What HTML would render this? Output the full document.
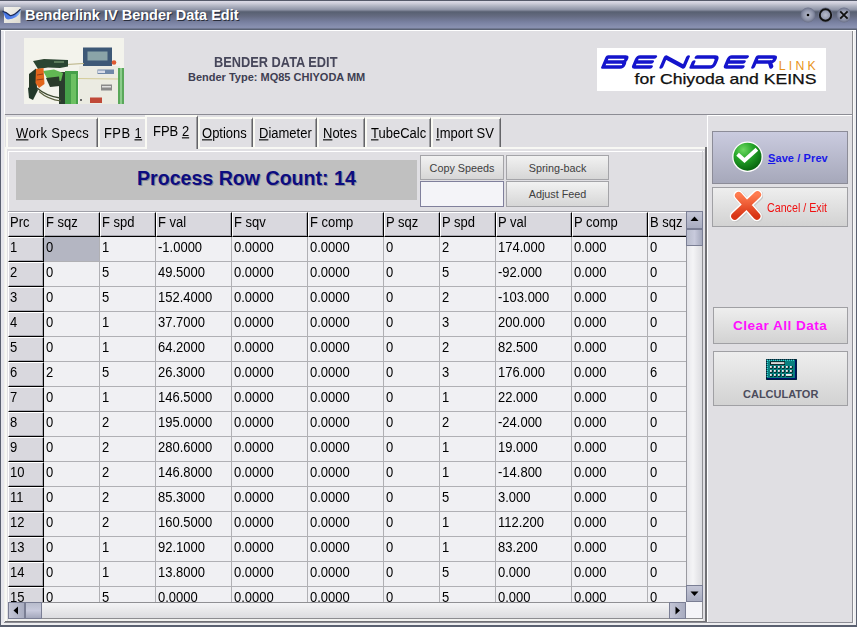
<!DOCTYPE html>
<html><head><meta charset="utf-8">
<style>
*{margin:0;padding:0;box-sizing:border-box}
html,body{width:857px;height:627px;overflow:hidden;background:#E0DFE3;font-family:"Liberation Sans",sans-serif;color:#000}
.a{position:absolute}
#title{left:0;top:0;width:857px;height:30px;background:linear-gradient(to bottom,#555a6a 0px,#555a6a 1px,#dadae6 1px,#d0d0dc 3px,#b0b4c2 6px,#8c92a4 10px,#6a7082 11px,#586072 12px,#646a80 16px,#7880a0 22px,#8890b0 27px,#8890b0 28px,#5a6274 29px,#5a6274 30px)}
#ttext{left:25px;top:7px;font-size:14.5px;font-weight:bold;color:#fff;text-shadow:1px 1px 0 #2a2e3c;white-space:nowrap;letter-spacing:0}
.frameL{left:0;top:30px;width:1px;height:597px;background:#5a6070}
.frameR{left:856px;top:30px;width:1px;height:597px;background:#5a6070}
.frameB{left:0;top:625px;width:857px;height:2px;background:#5a6070}
.hl{background:#fff}
.gl{background:#8c8c94}
/* tabs */
.tab{height:30px;top:117px;background:#E0DFE3;border-top:2px solid #fafaf4;border-left:2px solid #fafaf4;border-right:1px solid #646468;box-shadow:inset -1px 0 0 #9c9ca0}
.tt{font-size:13px;line-height:15px;white-space:nowrap;transform:scaleY(1.1);transform-origin:0 0;letter-spacing:0}
.tt u{text-decoration:underline;text-underline-offset:1px;text-decoration-thickness:1px}
.tsel{top:115px;height:34px;border-left:2px solid #fafaf4;border-top:2px solid #fafaf4;border-right:1px solid #646468;z-index:3}
/* grid */
#grid{left:8px;top:211px;width:695px;height:408px;overflow:hidden;background:#f0f0f4}
#grid:before{content:"";position:absolute;left:0;top:0;width:100%;height:1px;background:#a0a0a8}
.hc,.rh,.c,.cs{position:absolute;height:25px;font-size:13px;line-height:15px;white-space:nowrap;overflow:hidden}
.hc span,.rh span,.c span,.cs span{display:inline-block;transform:scaleY(1.1);transform-origin:0 0}
.hc,.rh{background:#d9d8de;border-top:1px solid #fff;border-left:1px solid #fff;border-right:1px solid #000;border-bottom:1px solid #000;box-shadow:inset -1px -1px 0 #a8a8b0;padding:1px 0 0 1px}
.c,.cs{background:#f0f0f3;border-right:1px solid #b0b0b4;border-bottom:1px solid #b0b0b4;padding:2px 0 0 2px}
.cs{background:#b4b6c2}
.btn{background:linear-gradient(to bottom,#f2f2f2,#d6d6d6);border:1px solid #a4a4a8;text-align:center;color:#404040;white-space:nowrap}
</style></head><body>
<!-- title bar -->
<div id="title" class="a"></div>
<svg class="a" style="left:1px;top:7px" width="21" height="17" viewBox="0 0 21 17">
 <defs><linearGradient id="ib" x1="0" y1="0" x2="1" y2="1"><stop offset="0" stop-color="#f4f4f0"/><stop offset="1" stop-color="#dcdad0"/></linearGradient>
 <linearGradient id="bb" x1="0" y1="0" x2="1" y2="0"><stop offset="0" stop-color="#3f6fe0"/><stop offset="0.7" stop-color="#5a88f0"/><stop offset="1" stop-color="#90c0f0"/></linearGradient></defs>
 <rect x="3" y="0" width="16.5" height="16" fill="url(#ib)"/>
 <path d="M1.5 4.5 Q5 5 9 8.5 Q12 9.5 19.5 2.5 L19.5 5 Q16 12 7 12.5 Q4 12 3 7 Z" fill="url(#bb)"/>
 <path d="M1.5 4.3 Q5 4.8 9 8.5 Q12 9.6 19.5 2.3" stroke="#1c2c5c" stroke-width="1.3" fill="none"/>
</svg>
<div id="ttext" class="a">Benderlink IV Bender Data Edit</div>
<!-- window buttons -->
<svg class="a" style="left:800px;top:5px" width="50" height="20" viewBox="0 0 50 20">
 <defs><radialGradient id="wb" cx="50%" cy="50%" r="50%"><stop offset="0" stop-color="#b8bccc"/><stop offset="0.7" stop-color="#8a90a6"/><stop offset="1" stop-color="#6a7088"/></radialGradient></defs>
 <circle cx="8" cy="10" r="7.5" fill="url(#wb)"/>
 <circle cx="8" cy="10" r="1.3" fill="#000"/>
 <circle cx="25.5" cy="10" r="7.5" fill="url(#wb)"/>
 <circle cx="25.5" cy="10" r="5.7" fill="none" stroke="#111" stroke-width="1.9"/>
 <circle cx="44" cy="10" r="7.5" fill="url(#wb)"/>
 <path d="M40.2 6.4 L47.6 13.6 M47.6 6.4 L40.2 13.6" stroke="#111" stroke-width="1.9"/>
</svg>
<div class="a hl" style="left:1px;top:30px;width:855px;height:1px"></div>
<div class="a frameL"></div><div class="a frameR"></div><div class="a frameB"></div>
<div class="a" style="left:1px;top:31px;width:3px;height:594px;background:#e6e6ec"></div>
<div class="a" style="left:4px;top:31px;width:1px;height:591px;background:#fff"></div>
<div class="a" style="left:853px;top:31px;width:3px;height:594px;background:#eeeef0"></div>
<div class="a" style="left:853px;top:31px;width:1px;height:594px;background:#fafafa"></div>
<div class="a" style="left:852px;top:31px;width:1px;height:592px;background:#8c8c90"></div>
<div class="a" style="left:1px;top:623px;width:855px;height:2px;background:#eeeef0"></div>

<!-- header area -->
<svg class="a" style="left:24px;top:38px" width="100" height="66" viewBox="0 0 100 66">
 <defs><filter id="bl" x="-5%" y="-5%" width="110%" height="110%"><feGaussianBlur stdDeviation="0.75"/></filter></defs>
 <rect width="100" height="66" fill="#f3f3ec"/>
 <g filter="url(#bl)">
 <rect x="55" y="28" width="41" height="38" fill="#ebebe2"/>
 <path d="M52 40.5 L95 41" stroke="#d4cc98" stroke-width="1"/>
 <rect x="59" y="9.5" width="29" height="18.5" fill="#3e5876"/>
 <rect x="63.5" y="13.5" width="20" height="9" fill="#8aa4a8"/>
 <circle cx="90" cy="24.5" r="2.3" fill="#e05a30"/>
 <rect x="73.5" y="31.5" width="16.5" height="4.5" fill="#7088a8"/>
 <rect x="74" y="32.5" width="7" height="2.5" fill="#d8dce8"/>
 <rect x="77" y="46.5" width="11" height="6" fill="#8a8a8a"/>
 <rect x="78" y="48" width="9" height="1.5" fill="#e0e0e0"/>
 <rect x="66" y="59.5" width="12" height="5.5" fill="#c04838"/>
 <rect x="94" y="30" width="6" height="36" fill="#5aa85a"/>
 <rect x="96" y="30" width="2" height="36" fill="#8ccc8c"/>
 <path d="M42 26.5 L60 25.5" stroke="#b8b080" stroke-width="1"/>
 <rect x="35" y="34" width="7" height="32" fill="#2c3e2e"/>
 <rect x="41" y="33" width="13" height="33" fill="#44a048"/>
 <rect x="47" y="36" width="5" height="30" fill="#6cc062"/>
 <path d="M9 23 L20 21 L44 22 L44 28.5 L36 30 L24 29.5 L14 31 Z" fill="#2c4430"/>
 <rect x="30" y="23" width="10" height="2" fill="#5a7a5a"/>
 <path d="M19 33 L30 31.5 L39 35 L37 43 L24 42 Z" fill="#62b852"/>
 <path d="M22 40 L35 38.5 L36 48 L26 49 Z" fill="#2a3a2a"/>
 <path d="M5 36 L12 30.5 L13 50 L9 55 L5 50 Z" fill="#283828"/>
 <path d="M12 31 L19.5 30 L20.5 46 L15 50 L11.5 45 Z" fill="#e2661f"/>
 <path d="M13 37 L19 36 M12.5 42 L19.5 41" stroke="#8a3a10" stroke-width="0.9"/>
 <path d="M4 50 L11 46 L14 52 L9 62 L5 60 Z" fill="#24382a"/>
 <path d="M13 50 Q22 58 36 60" stroke="#3c4830" stroke-width="1.3" fill="none"/>
 <path d="M15 53.5 Q24 61.5 37 63" stroke="#5a6040" stroke-width="1.1" fill="none"/>
 <circle cx="57" cy="62" r="1" fill="#404040"/>
 </g>
</svg>
<div class="a" style="left:214px;top:54px;font-size:12.8px;font-weight:bold;color:#46465a;white-space:nowrap;transform:scaleY(1.1);transform-origin:0 0">BENDER DATA EDIT</div>
<div class="a" style="left:188px;top:71px;font-size:11px;font-weight:bold;color:#3e3e52;white-space:nowrap">Bender Type: MQ85 CHIYODA MM</div>

<!-- logo -->
<div class="a" style="left:597px;top:48px;width:229px;height:43px;background:#fff"></div>
<svg class="a" style="left:597px;top:48px" width="229" height="43" viewBox="0 0 229 43">
 <g transform="translate(0 7.25) skewX(-23.3)"><path d="M11.100000000000001 11.7 L11.100000000000001 1.8 L28.700000000000003 1.8 Q30.900000000000002 1.8 30.900000000000002 4.0 Q30.900000000000002 6.75 28.200000000000003 6.75 L11.100000000000001 6.75 M28.200000000000003 6.75 Q30.900000000000002 6.75 30.900000000000002 9.15 Q30.900000000000002 11.7 28.700000000000003 11.7 L11.100000000000001 11.7 M58.900000000000006 1.8 L43.099999999999994 1.8 Q41.39999999999999 1.8 41.39999999999999 3.8 L41.39999999999999 9.7 Q41.39999999999999 11.7 43.099999999999994 11.7 L58.900000000000006 11.7 M41.39999999999999 6.75 L57.900000000000006 6.75 M69.39999999999999 11.7 L69.39999999999999 1.8 L91.7 11.7 L91.7 1.8 M100.39999999999999 1.8 L118.2 1.8 Q121.4 1.8 121.4 5.3 L121.4 8.2 Q121.4 11.7 118.2 11.7 L99.39999999999999 11.7 L99.39999999999999 6.75 M150.7 1.8 L134.9 1.8 Q133.20000000000002 1.8 133.20000000000002 3.8 L133.20000000000002 9.7 Q133.20000000000002 11.7 134.9 11.7 L150.7 11.7 M133.20000000000002 6.75 L149.7 6.75 M161.20000000000002 11.7 L161.20000000000002 1.8 L177.2 1.8 Q179.39999999999998 1.8 179.39999999999998 4.0 Q179.39999999999998 6.75 176.7 6.75 L161.20000000000002 6.75 M175.7 6.75 L179.39999999999998 11.7" fill="none" stroke="#1414cc" stroke-width="3.6" stroke-linecap="round" stroke-linejoin="round"/></g>
 <text x="181.7" y="21.6" font-family="Liberation Sans" font-size="12.3" fill="#e89418" textLength="37" lengthAdjust="spacing">LINK</text>
 <text x="37.5" y="35.7" font-family="Liberation Sans" font-size="14.8" fill="#101010" stroke="#101010" stroke-width="0.25" textLength="182" lengthAdjust="spacingAndGlyphs">for Chiyoda and KEINS</text>
</svg>

<!-- separators -->
<div class="a gl" style="left:4px;top:114px;width:849px;height:1px"></div>
<div class="a hl" style="left:707px;top:115px;width:145px;height:1px"></div>
<div class="a hl" style="left:707px;top:115px;width:1px;height:507px"></div>
<div class="a gl" style="left:852px;top:114px;width:1px;height:509px"></div>
<div class="a gl" style="left:4px;top:622px;width:849px;height:1px"></div>
<div class="a" style="left:4px;top:114px;width:1px;height:508px;background:#f0f0ec"></div>

<!-- tab page frame -->
<div class="a" style="left:5px;top:147px;width:701px;height:2px;background:#f8f8f4"></div>
<div class="a" style="left:5px;top:147px;width:2px;height:475px;background:#f8f8f4"></div>
<div class="a" style="left:705px;top:147px;width:2px;height:475px;background:#707074"></div>
<div class="a" style="left:5px;top:621px;width:702px;height:1px;background:#707074"></div>
<div class="a" style="left:8px;top:619px;width:695px;height:2px;background:#f2f2f0"></div>
<div class="a" style="left:8px;top:151px;width:696px;height:1px;background:#fff"></div>
<div class="a" style="left:8px;top:151px;width:1px;height:468px;background:#fff"></div>
<div class="a" style="left:702px;top:151px;width:1px;height:468px;background:#d0d0d4"></div>

<!-- tabs -->
<div class="a tab" style="left:6px;width:92px"></div>
<div class="a tab" style="left:98px;width:47px;border-right:none;box-shadow:none"></div>
<div class="a tab" style="left:198px;width:55px"></div>
<div class="a tab" style="left:253px;width:64px"></div>
<div class="a tab" style="left:317px;width:48px"></div>
<div class="a tab" style="left:365px;width:66px"></div>
<div class="a tab" style="left:431px;width:70px"></div>
<div class="a tab tsel" style="left:145px;width:53px"></div>
<div class="a tt" style="left:16px;top:125px;letter-spacing:0.33px"><u>W</u>ork Specs</div>
<div class="a tt" style="left:104px;top:125px;letter-spacing:0.4px">FPB <u>1</u></div>
<div class="a tt" style="left:153px;top:123px;z-index:4">FPB <u>2</u></div>
<div class="a tt" style="left:202px;top:125px"><u>O</u>ptions</div>
<div class="a tt" style="left:259px;top:125px"><u>D</u>iameter</div>
<div class="a tt" style="left:323px;top:125px"><u>N</u>otes</div>
<div class="a tt" style="left:371px;top:125px"><u>T</u>ubeCalc</div>
<div class="a tt" style="left:436px;top:125px"><u>I</u>mport SV</div>
<!-- banner -->
<div class="a" style="left:16px;top:160px;width:401px;height:40px;background:#c0c0c0"></div>
<div class="a" style="left:137px;top:167px;font-size:19.6px;font-weight:bold;color:#0c0c80;text-shadow:1px 1px 0 #8a8a96;white-space:nowrap">Process Row Count: 14</div>

<div class="a btn" style="left:420px;top:155px;width:84px;height:25px;font-size:10.8px;line-height:24px">Copy Speeds</div>
<div class="a" style="left:420px;top:181px;width:84px;height:26px;background:#f4f4f8;border:1px solid #80809c"></div>
<div class="a btn" style="left:506px;top:155px;width:103px;height:25px;font-size:10.8px;line-height:24px">Spring-back</div>
<div class="a btn" style="left:506px;top:181px;width:103px;height:26px;font-size:10.8px;line-height:24px">Adjust Feed</div>

<!-- grid -->
<div id="grid" class="a">
<div class="hc" style="left:0px;top:1px;width:36px"><span>Prc</span></div>
<div class="hc" style="left:36px;top:1px;width:56px"><span>F sqz</span></div>
<div class="hc" style="left:92px;top:1px;width:56px"><span>F spd</span></div>
<div class="hc" style="left:148px;top:1px;width:76px"><span>F val</span></div>
<div class="hc" style="left:224px;top:1px;width:76px"><span>F sqv</span></div>
<div class="hc" style="left:300px;top:1px;width:76px"><span>F comp</span></div>
<div class="hc" style="left:376px;top:1px;width:56px"><span>P sqz</span></div>
<div class="hc" style="left:432px;top:1px;width:56px"><span>P spd</span></div>
<div class="hc" style="left:488px;top:1px;width:76px"><span>P val</span></div>
<div class="hc" style="left:564px;top:1px;width:76px"><span>P comp</span></div>
<div class="hc" style="left:640px;top:1px;width:76px"><span>B sqz</span></div>
<div class="rh" style="left:0px;top:26px;width:36px"><span>1</span></div>
<div class="cs" style="left:36px;top:26px;width:56px"><span>0</span></div>
<div class="c" style="left:92px;top:26px;width:56px"><span>1</span></div>
<div class="c" style="left:148px;top:26px;width:76px"><span>-1.0000</span></div>
<div class="c" style="left:224px;top:26px;width:76px"><span>0.0000</span></div>
<div class="c" style="left:300px;top:26px;width:76px"><span>0.0000</span></div>
<div class="c" style="left:376px;top:26px;width:56px"><span>0</span></div>
<div class="c" style="left:432px;top:26px;width:56px"><span>2</span></div>
<div class="c" style="left:488px;top:26px;width:76px"><span>174.000</span></div>
<div class="c" style="left:564px;top:26px;width:76px"><span>0.000</span></div>
<div class="c" style="left:640px;top:26px;width:76px"><span>0</span></div>
<div class="rh" style="left:0px;top:51px;width:36px"><span>2</span></div>
<div class="c" style="left:36px;top:51px;width:56px"><span>0</span></div>
<div class="c" style="left:92px;top:51px;width:56px"><span>5</span></div>
<div class="c" style="left:148px;top:51px;width:76px"><span>49.5000</span></div>
<div class="c" style="left:224px;top:51px;width:76px"><span>0.0000</span></div>
<div class="c" style="left:300px;top:51px;width:76px"><span>0.0000</span></div>
<div class="c" style="left:376px;top:51px;width:56px"><span>0</span></div>
<div class="c" style="left:432px;top:51px;width:56px"><span>5</span></div>
<div class="c" style="left:488px;top:51px;width:76px"><span>-92.000</span></div>
<div class="c" style="left:564px;top:51px;width:76px"><span>0.000</span></div>
<div class="c" style="left:640px;top:51px;width:76px"><span>0</span></div>
<div class="rh" style="left:0px;top:76px;width:36px"><span>3</span></div>
<div class="c" style="left:36px;top:76px;width:56px"><span>0</span></div>
<div class="c" style="left:92px;top:76px;width:56px"><span>5</span></div>
<div class="c" style="left:148px;top:76px;width:76px"><span>152.4000</span></div>
<div class="c" style="left:224px;top:76px;width:76px"><span>0.0000</span></div>
<div class="c" style="left:300px;top:76px;width:76px"><span>0.0000</span></div>
<div class="c" style="left:376px;top:76px;width:56px"><span>0</span></div>
<div class="c" style="left:432px;top:76px;width:56px"><span>2</span></div>
<div class="c" style="left:488px;top:76px;width:76px"><span>-103.000</span></div>
<div class="c" style="left:564px;top:76px;width:76px"><span>0.000</span></div>
<div class="c" style="left:640px;top:76px;width:76px"><span>0</span></div>
<div class="rh" style="left:0px;top:101px;width:36px"><span>4</span></div>
<div class="c" style="left:36px;top:101px;width:56px"><span>0</span></div>
<div class="c" style="left:92px;top:101px;width:56px"><span>1</span></div>
<div class="c" style="left:148px;top:101px;width:76px"><span>37.7000</span></div>
<div class="c" style="left:224px;top:101px;width:76px"><span>0.0000</span></div>
<div class="c" style="left:300px;top:101px;width:76px"><span>0.0000</span></div>
<div class="c" style="left:376px;top:101px;width:56px"><span>0</span></div>
<div class="c" style="left:432px;top:101px;width:56px"><span>3</span></div>
<div class="c" style="left:488px;top:101px;width:76px"><span>200.000</span></div>
<div class="c" style="left:564px;top:101px;width:76px"><span>0.000</span></div>
<div class="c" style="left:640px;top:101px;width:76px"><span>0</span></div>
<div class="rh" style="left:0px;top:126px;width:36px"><span>5</span></div>
<div class="c" style="left:36px;top:126px;width:56px"><span>0</span></div>
<div class="c" style="left:92px;top:126px;width:56px"><span>1</span></div>
<div class="c" style="left:148px;top:126px;width:76px"><span>64.2000</span></div>
<div class="c" style="left:224px;top:126px;width:76px"><span>0.0000</span></div>
<div class="c" style="left:300px;top:126px;width:76px"><span>0.0000</span></div>
<div class="c" style="left:376px;top:126px;width:56px"><span>0</span></div>
<div class="c" style="left:432px;top:126px;width:56px"><span>2</span></div>
<div class="c" style="left:488px;top:126px;width:76px"><span>82.500</span></div>
<div class="c" style="left:564px;top:126px;width:76px"><span>0.000</span></div>
<div class="c" style="left:640px;top:126px;width:76px"><span>0</span></div>
<div class="rh" style="left:0px;top:151px;width:36px"><span>6</span></div>
<div class="c" style="left:36px;top:151px;width:56px"><span>2</span></div>
<div class="c" style="left:92px;top:151px;width:56px"><span>5</span></div>
<div class="c" style="left:148px;top:151px;width:76px"><span>26.3000</span></div>
<div class="c" style="left:224px;top:151px;width:76px"><span>0.0000</span></div>
<div class="c" style="left:300px;top:151px;width:76px"><span>0.0000</span></div>
<div class="c" style="left:376px;top:151px;width:56px"><span>0</span></div>
<div class="c" style="left:432px;top:151px;width:56px"><span>3</span></div>
<div class="c" style="left:488px;top:151px;width:76px"><span>176.000</span></div>
<div class="c" style="left:564px;top:151px;width:76px"><span>0.000</span></div>
<div class="c" style="left:640px;top:151px;width:76px"><span>6</span></div>
<div class="rh" style="left:0px;top:176px;width:36px"><span>7</span></div>
<div class="c" style="left:36px;top:176px;width:56px"><span>0</span></div>
<div class="c" style="left:92px;top:176px;width:56px"><span>1</span></div>
<div class="c" style="left:148px;top:176px;width:76px"><span>146.5000</span></div>
<div class="c" style="left:224px;top:176px;width:76px"><span>0.0000</span></div>
<div class="c" style="left:300px;top:176px;width:76px"><span>0.0000</span></div>
<div class="c" style="left:376px;top:176px;width:56px"><span>0</span></div>
<div class="c" style="left:432px;top:176px;width:56px"><span>1</span></div>
<div class="c" style="left:488px;top:176px;width:76px"><span>22.000</span></div>
<div class="c" style="left:564px;top:176px;width:76px"><span>0.000</span></div>
<div class="c" style="left:640px;top:176px;width:76px"><span>0</span></div>
<div class="rh" style="left:0px;top:201px;width:36px"><span>8</span></div>
<div class="c" style="left:36px;top:201px;width:56px"><span>0</span></div>
<div class="c" style="left:92px;top:201px;width:56px"><span>2</span></div>
<div class="c" style="left:148px;top:201px;width:76px"><span>195.0000</span></div>
<div class="c" style="left:224px;top:201px;width:76px"><span>0.0000</span></div>
<div class="c" style="left:300px;top:201px;width:76px"><span>0.0000</span></div>
<div class="c" style="left:376px;top:201px;width:56px"><span>0</span></div>
<div class="c" style="left:432px;top:201px;width:56px"><span>2</span></div>
<div class="c" style="left:488px;top:201px;width:76px"><span>-24.000</span></div>
<div class="c" style="left:564px;top:201px;width:76px"><span>0.000</span></div>
<div class="c" style="left:640px;top:201px;width:76px"><span>0</span></div>
<div class="rh" style="left:0px;top:226px;width:36px"><span>9</span></div>
<div class="c" style="left:36px;top:226px;width:56px"><span>0</span></div>
<div class="c" style="left:92px;top:226px;width:56px"><span>2</span></div>
<div class="c" style="left:148px;top:226px;width:76px"><span>280.6000</span></div>
<div class="c" style="left:224px;top:226px;width:76px"><span>0.0000</span></div>
<div class="c" style="left:300px;top:226px;width:76px"><span>0.0000</span></div>
<div class="c" style="left:376px;top:226px;width:56px"><span>0</span></div>
<div class="c" style="left:432px;top:226px;width:56px"><span>1</span></div>
<div class="c" style="left:488px;top:226px;width:76px"><span>19.000</span></div>
<div class="c" style="left:564px;top:226px;width:76px"><span>0.000</span></div>
<div class="c" style="left:640px;top:226px;width:76px"><span>0</span></div>
<div class="rh" style="left:0px;top:251px;width:36px"><span>10</span></div>
<div class="c" style="left:36px;top:251px;width:56px"><span>0</span></div>
<div class="c" style="left:92px;top:251px;width:56px"><span>2</span></div>
<div class="c" style="left:148px;top:251px;width:76px"><span>146.8000</span></div>
<div class="c" style="left:224px;top:251px;width:76px"><span>0.0000</span></div>
<div class="c" style="left:300px;top:251px;width:76px"><span>0.0000</span></div>
<div class="c" style="left:376px;top:251px;width:56px"><span>0</span></div>
<div class="c" style="left:432px;top:251px;width:56px"><span>1</span></div>
<div class="c" style="left:488px;top:251px;width:76px"><span>-14.800</span></div>
<div class="c" style="left:564px;top:251px;width:76px"><span>0.000</span></div>
<div class="c" style="left:640px;top:251px;width:76px"><span>0</span></div>
<div class="rh" style="left:0px;top:276px;width:36px"><span>11</span></div>
<div class="c" style="left:36px;top:276px;width:56px"><span>0</span></div>
<div class="c" style="left:92px;top:276px;width:56px"><span>2</span></div>
<div class="c" style="left:148px;top:276px;width:76px"><span>85.3000</span></div>
<div class="c" style="left:224px;top:276px;width:76px"><span>0.0000</span></div>
<div class="c" style="left:300px;top:276px;width:76px"><span>0.0000</span></div>
<div class="c" style="left:376px;top:276px;width:56px"><span>0</span></div>
<div class="c" style="left:432px;top:276px;width:56px"><span>5</span></div>
<div class="c" style="left:488px;top:276px;width:76px"><span>3.000</span></div>
<div class="c" style="left:564px;top:276px;width:76px"><span>0.000</span></div>
<div class="c" style="left:640px;top:276px;width:76px"><span>0</span></div>
<div class="rh" style="left:0px;top:301px;width:36px"><span>12</span></div>
<div class="c" style="left:36px;top:301px;width:56px"><span>0</span></div>
<div class="c" style="left:92px;top:301px;width:56px"><span>2</span></div>
<div class="c" style="left:148px;top:301px;width:76px"><span>160.5000</span></div>
<div class="c" style="left:224px;top:301px;width:76px"><span>0.0000</span></div>
<div class="c" style="left:300px;top:301px;width:76px"><span>0.0000</span></div>
<div class="c" style="left:376px;top:301px;width:56px"><span>0</span></div>
<div class="c" style="left:432px;top:301px;width:56px"><span>1</span></div>
<div class="c" style="left:488px;top:301px;width:76px"><span>112.200</span></div>
<div class="c" style="left:564px;top:301px;width:76px"><span>0.000</span></div>
<div class="c" style="left:640px;top:301px;width:76px"><span>0</span></div>
<div class="rh" style="left:0px;top:326px;width:36px"><span>13</span></div>
<div class="c" style="left:36px;top:326px;width:56px"><span>0</span></div>
<div class="c" style="left:92px;top:326px;width:56px"><span>1</span></div>
<div class="c" style="left:148px;top:326px;width:76px"><span>92.1000</span></div>
<div class="c" style="left:224px;top:326px;width:76px"><span>0.0000</span></div>
<div class="c" style="left:300px;top:326px;width:76px"><span>0.0000</span></div>
<div class="c" style="left:376px;top:326px;width:56px"><span>0</span></div>
<div class="c" style="left:432px;top:326px;width:56px"><span>1</span></div>
<div class="c" style="left:488px;top:326px;width:76px"><span>83.200</span></div>
<div class="c" style="left:564px;top:326px;width:76px"><span>0.000</span></div>
<div class="c" style="left:640px;top:326px;width:76px"><span>0</span></div>
<div class="rh" style="left:0px;top:351px;width:36px"><span>14</span></div>
<div class="c" style="left:36px;top:351px;width:56px"><span>0</span></div>
<div class="c" style="left:92px;top:351px;width:56px"><span>1</span></div>
<div class="c" style="left:148px;top:351px;width:76px"><span>13.8000</span></div>
<div class="c" style="left:224px;top:351px;width:76px"><span>0.0000</span></div>
<div class="c" style="left:300px;top:351px;width:76px"><span>0.0000</span></div>
<div class="c" style="left:376px;top:351px;width:56px"><span>0</span></div>
<div class="c" style="left:432px;top:351px;width:56px"><span>5</span></div>
<div class="c" style="left:488px;top:351px;width:76px"><span>0.000</span></div>
<div class="c" style="left:564px;top:351px;width:76px"><span>0.000</span></div>
<div class="c" style="left:640px;top:351px;width:76px"><span>0</span></div>
<div class="rh" style="left:0px;top:376px;width:36px"><span>15</span></div>
<div class="c" style="left:36px;top:376px;width:56px"><span>0</span></div>
<div class="c" style="left:92px;top:376px;width:56px"><span>5</span></div>
<div class="c" style="left:148px;top:376px;width:76px"><span>0.0000</span></div>
<div class="c" style="left:224px;top:376px;width:76px"><span>0.0000</span></div>
<div class="c" style="left:300px;top:376px;width:76px"><span>0.0000</span></div>
<div class="c" style="left:376px;top:376px;width:56px"><span>0</span></div>
<div class="c" style="left:432px;top:376px;width:56px"><span>5</span></div>
<div class="c" style="left:488px;top:376px;width:76px"><span>0.000</span></div>
<div class="c" style="left:564px;top:376px;width:76px"><span>0.000</span></div>
<div class="c" style="left:640px;top:376px;width:76px"><span>0</span></div>
</div>
<!-- vertical scrollbar -->
<div class="a" style="left:686px;top:211px;width:17px;height:391px;background:linear-gradient(to right,#e8e8ec,#f4f4f6 40%,#dcdce0);border-left:1px solid #9a9aa0;border-right:1px solid #909094"></div>
<div class="a" style="left:686px;top:211px;width:17px;height:18px;background:linear-gradient(to bottom,#c4c6d6,#a8acc0);border:1px solid #7a7e94"></div>
<svg class="a" style="left:690px;top:216px" width="9" height="6"><path d="M0.5 5 L4.5 0.5 L8.5 5 Z" fill="#000"/></svg>
<div class="a" style="left:686px;top:229px;width:17px;height:17px;background:linear-gradient(to right,#b8bccc,#c8cadc 50%,#a4a8bc);border:1px solid #7a7e94"></div>
<div class="a" style="left:686px;top:585px;width:17px;height:17px;background:linear-gradient(to bottom,#c4c6d6,#a8acc0);border:1px solid #7a7e94"></div>
<svg class="a" style="left:690px;top:591px" width="9" height="6"><path d="M0.5 0.5 L4.5 5 L8.5 0.5 Z" fill="#000"/></svg>
<!-- horizontal scrollbar -->
<div class="a" style="left:8px;top:602px;width:678px;height:17px;background:linear-gradient(to bottom,#f4f4f6,#e8e8ea 50%,#dcdce0);border-top:1px solid #909094;border-bottom:1px solid #8c8c90"></div>
<div class="a" style="left:8px;top:602px;width:17px;height:17px;background:linear-gradient(to right,#c4c6d6,#a8acc0);border:1px solid #7a7e94"></div>
<svg class="a" style="left:13px;top:606px" width="6" height="9"><path d="M5 0.5 L0.5 4.5 L5 8.5 Z" fill="#000"/></svg>
<div class="a" style="left:25px;top:602px;width:17px;height:17px;background:linear-gradient(to bottom,#b8bccc,#c8cadc 50%,#a4a8bc);border:1px solid #7a7e94"></div>
<div class="a" style="left:669px;top:602px;width:17px;height:17px;background:linear-gradient(to right,#c4c6d6,#a8acc0);border:1px solid #7a7e94"></div>
<svg class="a" style="left:675px;top:606px" width="6" height="9"><path d="M0.5 0.5 L5 4.5 L0.5 8.5 Z" fill="#000"/></svg>
<div class="a" style="left:686px;top:602px;width:17px;height:17px;background:#f4f4f8;border-right:1px solid #8c8c90;border-bottom:1px solid #8c8c90"></div>

<!-- right panel buttons -->
<div class="a" style="left:712px;top:131px;width:136px;height:53px;background:linear-gradient(to bottom,#cacbdf,#a6a8ba);border:1px solid #8c8c98"></div>
<svg class="a" style="left:731px;top:140px" width="34" height="34" viewBox="0 0 34 34">
 <defs><radialGradient id="gg" cx="35%" cy="25%" r="80%"><stop offset="0" stop-color="#6cd860"/><stop offset="0.45" stop-color="#24a428"/><stop offset="1" stop-color="#06600e"/></radialGradient></defs>
 <circle cx="16.5" cy="16.7" r="15.3" fill="#fff"/>
 <circle cx="16.5" cy="16.7" r="14" fill="url(#gg)"/>
 <path d="M8 15.5 L13.5 20.5 L24.5 10.5" stroke="#fff" stroke-width="3.8" fill="none" stroke-linecap="square" stroke-linejoin="miter"/>
</svg>
<div class="a" style="left:768px;top:152px;font-size:11px;font-weight:bold;color:#1818e8;white-space:nowrap;letter-spacing:0.1px"><span style="text-decoration:underline">S</span>ave / Prev</div>

<div class="a" style="left:712px;top:187px;width:136px;height:40px;background:linear-gradient(to bottom,#eeeeee,#d2d2d2);border:1px solid #a0a0a4"></div>
<svg class="a" style="left:729px;top:190px" width="34" height="34" viewBox="0 0 34 34">
 <defs><linearGradient id="rg" x1="0" y1="0" x2="0" y2="1"><stop offset="0" stop-color="#ff7c50"/><stop offset="1" stop-color="#d83414"/></linearGradient></defs>
 <g stroke-linecap="round" fill="none">
 <path d="M9.5 5.5 L27.8 26.2 M28.5 4.7 L5.8 26.2" stroke="#c8c8c8" stroke-width="10.5" transform="translate(0.8 0.8)"/>
 <path d="M9.5 5.5 L27.8 26.2 M28.5 4.7 L5.8 26.2" stroke="#fff" stroke-width="10"/>
 <path d="M9.5 5.5 L27.8 26.2 M28.5 4.7 L5.8 26.2" stroke="url(#rg)" stroke-width="7.2"/>
 </g>
</svg>
<div class="a" style="left:767px;top:201px;font-size:10.7px;color:#f01010;white-space:nowrap;transform:scaleY(1.12);transform-origin:0 0">Cancel / Exit</div>

<div class="a" style="left:713px;top:307px;width:135px;height:37px;background:linear-gradient(to bottom,#eeeeee,#d2d2d2);border:1px solid #a0a0a4"></div>
<div class="a" style="left:733px;top:318px;font-size:13.6px;font-weight:bold;color:#ff10ff;white-space:nowrap;letter-spacing:0.45px">Clear All Data</div>

<div class="a" style="left:713px;top:351px;width:135px;height:55px;background:linear-gradient(to bottom,#eeeeee,#d2d2d2);border:1px solid #a0a0a4"></div>
<svg class="a" style="left:766px;top:359px" width="31" height="21" viewBox="0 0 31 21">
 <rect x="0" y="0" width="31" height="21" rx="0.8" fill="#0a8080"/>
 <path d="M0.5 0.5 L30.5 0.5 L30.5 20.5 L0.5 20.5 Z" fill="none" stroke="#002030" stroke-width="1"/>
 <path d="M1 1.2 L29 1.2 M1.2 1 L1.2 19" stroke="#50f4f4" stroke-width="1" stroke-dasharray="1 1"/>
 <path d="M29.6 1 L29.6 19.6 L1 19.6" stroke="#00106a" stroke-width="1.3" fill="none"/>
 <rect x="4.2" y="2.4" width="14.8" height="3.4" fill="#000"/><rect x="5" y="3.1" width="13.4" height="2" fill="#d8d8d8"/>
 <rect x="4" y="7" width="2.6" height="2.6" fill="#000"/><rect x="4" y="7" width="1.8" height="1.9" fill="#f4f0f4"/><rect x="8" y="7" width="2.6" height="2.6" fill="#000"/><rect x="8" y="7" width="1.8" height="1.9" fill="#f4f0f4"/><rect x="12" y="7" width="2.6" height="2.6" fill="#000"/><rect x="12" y="7" width="1.8" height="1.9" fill="#f4f0f4"/><rect x="16" y="7" width="2.6" height="2.6" fill="#000"/><rect x="16" y="7" width="1.8" height="1.9" fill="#f4f0f4"/><rect x="20" y="7" width="2.6" height="2.6" fill="#000"/><rect x="20" y="7" width="1.8" height="1.9" fill="#f4f0f4"/><rect x="24" y="7" width="2.6" height="2.6" fill="#000"/><rect x="24" y="7" width="1.8" height="1.9" fill="#f4f0f4"/><rect x="4" y="11" width="2.6" height="2.6" fill="#000"/><rect x="4" y="11" width="1.8" height="1.9" fill="#f4f0f4"/><rect x="8" y="11" width="2.6" height="2.6" fill="#000"/><rect x="8" y="11" width="1.8" height="1.9" fill="#f4f0f4"/><rect x="12" y="11" width="2.6" height="2.6" fill="#000"/><rect x="12" y="11" width="1.8" height="1.9" fill="#f4f0f4"/><rect x="16" y="11" width="2.6" height="2.6" fill="#000"/><rect x="16" y="11" width="1.8" height="1.9" fill="#f4f0f4"/><rect x="20" y="11" width="2.6" height="2.6" fill="#000"/><rect x="20" y="11" width="1.8" height="1.9" fill="#f4f0f4"/><rect x="24" y="11" width="2.6" height="2.6" fill="#000"/><rect x="24" y="11" width="1.8" height="1.9" fill="#f4f0f4"/><rect x="4" y="15" width="2.6" height="2.6" fill="#000"/><rect x="4" y="15" width="1.8" height="1.9" fill="#f4f0f4"/><rect x="8" y="15" width="2.6" height="2.6" fill="#000"/><rect x="8" y="15" width="1.8" height="1.9" fill="#f4f0f4"/><rect x="12" y="15" width="2.6" height="2.6" fill="#000"/><rect x="12" y="15" width="1.8" height="1.9" fill="#f4f0f4"/><rect x="16" y="15" width="2.6" height="2.6" fill="#000"/><rect x="16" y="15" width="1.8" height="1.9" fill="#f4f0f4"/><rect x="20" y="15" width="6.6" height="2.6" fill="#000"/><rect x="20" y="15" width="5.8" height="1.9" fill="#f4f0f4"/>
</svg>
<div class="a" style="left:743px;top:388px;font-size:11px;font-weight:bold;color:#4c4c5c;white-space:nowrap">CALCULATOR</div>
</body></html>
